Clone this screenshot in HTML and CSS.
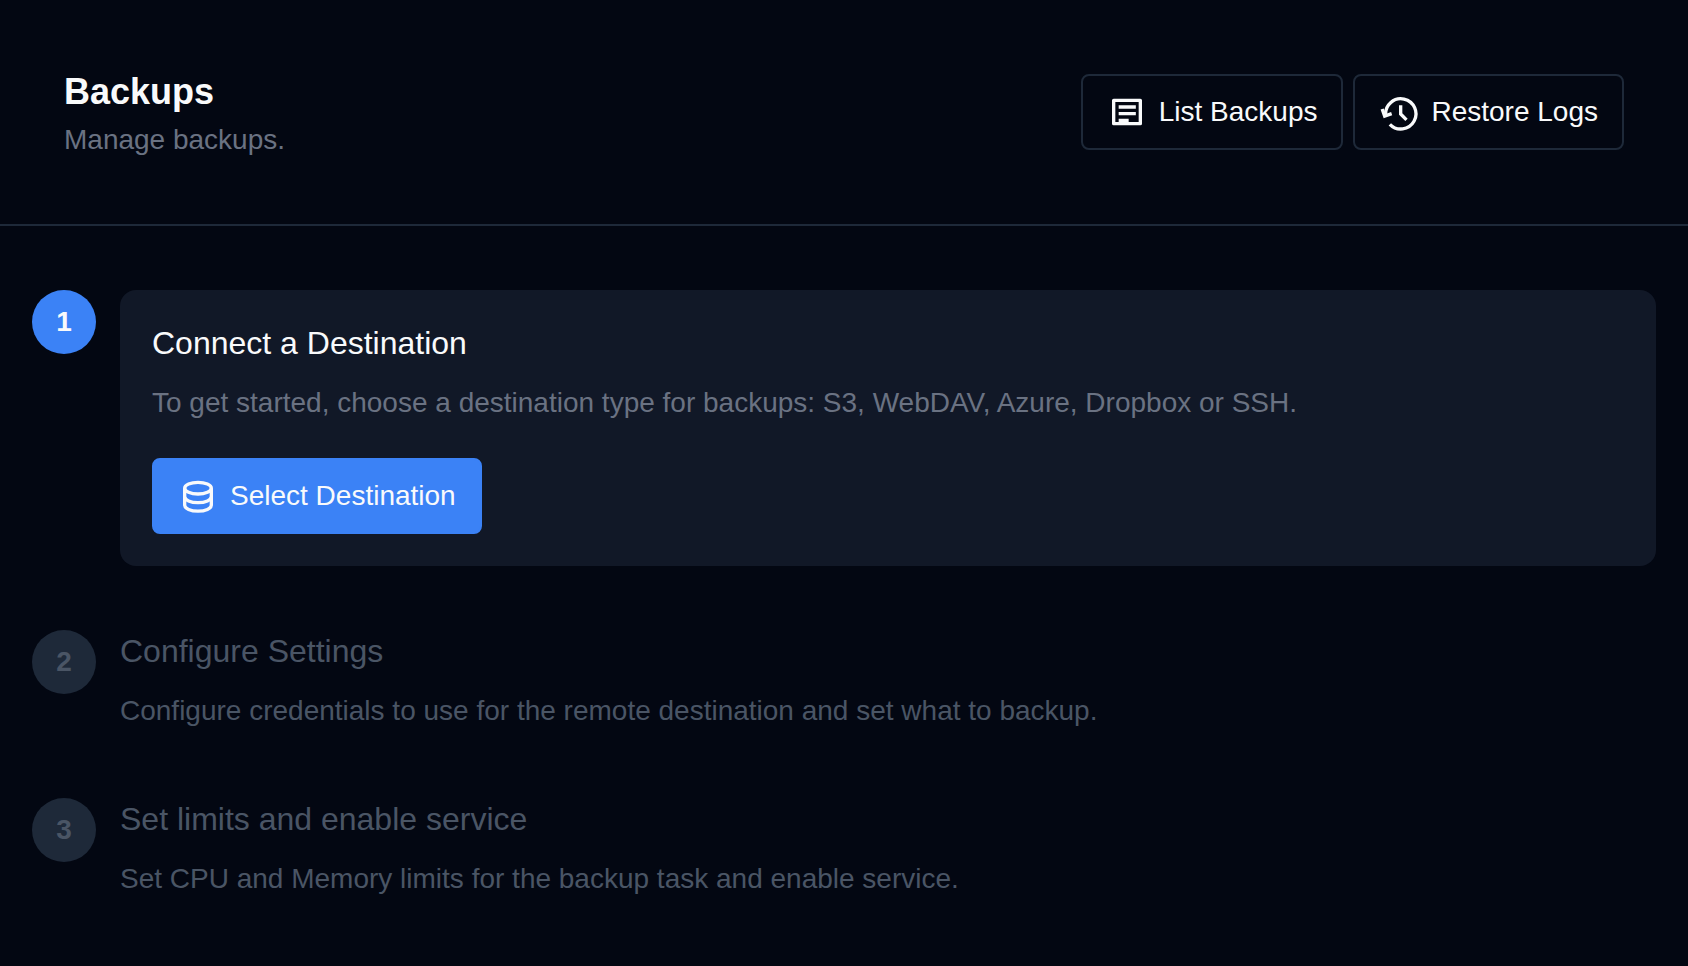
FILE: index.html
```
<!DOCTYPE html>
<html lang="en">
<head>
<meta charset="utf-8">
<meta name="viewport" content="width=device-width, initial-scale=1">
<title>Backups</title>
<link rel="stylesheet" href="styles.css">
</head>
<body>
<header class="page-header">
  <div class="heading">
    <h1 class="page-title">Backups</h1>
    <p class="subtitle">Manage backups.</p>
  </div>
  <div class="actions">
    <button type="button" class="button button-outline">
      <svg class="icon" viewBox="0 0 24 24" fill="none" stroke="currentColor" stroke-width="2" stroke-linejoin="round" aria-hidden="true">
        <path d="M4 5h16v14H4z"/>
        <path d="M7 9h10.300M7 13h10.300M7 17h6"/>
      </svg>
      List Backups
    </button>
    <button type="button" class="button button-outline">
      <svg class="icon" viewBox="0 0 24 24" fill="none" stroke="currentColor" stroke-width="2" aria-hidden="true">
        <path d="M4 13.800A9.100 9.100 0 1 1 6.500 19.400"/>
        <path d="M1.900 10.200l1.500 4.300 4.200-1.500"/>
        <path d="M13 8v5.200l3.500 3.500"/>
      </svg>
      Restore Logs
    </button>
  </div>
</header>
<main>
  <ol class="steps">
    <li class="step step-active">
      <span class="step-number">1</span>
      <section class="step-body">
        <h2 class="step-title">Connect a Destination</h2>
        <p class="step-text">To get started, choose a destination type for backups: S3, WebDAV, Azure, Dropbox or SSH.</p>
        <button type="button" class="button button-primary">
          <svg class="icon" viewBox="0 0 24 24" fill="none" stroke="currentColor" stroke-width="2" aria-hidden="true">
            <ellipse cx="12" cy="7.300" rx="8" ry="3.500"/>
            <path d="M4 7.300v10.300c0 1.930 3.580 3.500 8 3.500s8-1.570 8-3.500V7.300"/>
            <path d="M4 12.500c0 1.930 3.580 3.500 8 3.500s8-1.570 8-3.500"/>
          </svg>
          Select Destination
        </button>
      </section>
    </li>
    <li class="step">
      <span class="step-number">2</span>
      <section class="step-body">
        <h2 class="step-title">Configure Settings</h2>
        <p class="step-text">Configure credentials to use for the remote destination and set what to backup.</p>
      </section>
    </li>
    <li class="step">
      <span class="step-number">3</span>
      <section class="step-body">
        <h2 class="step-title">Set limits and enable service</h2>
        <p class="step-text">Set CPU and Memory limits for the backup task and enable service.</p>
      </section>
    </li>
  </ol>
</main>
</body>
</html>
```
FILE: styles.css
```
* {
  box-sizing: border-box;
}

body {
  margin: 0;
  background: #030712;
  color: #f9fafb;
  font: 28px/40px "Liberation Sans", Arial, sans-serif;
}

h1, h2, p, ol {
  margin: 0;
  padding: 0;
}

.page-header {
  display: flex;
  flex-wrap: wrap;
  align-items: center;
  justify-content: space-between;
  gap: 24px;
  padding: 64px;
  border-bottom: 2px solid #1e2939;
}

.page-title {
  font-size: 36px;
  line-height: 56px;
  font-weight: 700;
}

.subtitle {
  color: #6a7282;
}

.actions {
  display: flex;
  flex-wrap: wrap;
  gap: 10px;
}

.button {
  display: flex;
  align-items: center;
  gap: 12px;
  padding: 16px 24px;
  border: 2px solid transparent;
  border-radius: 8px;
  color: #f9fafb;
  font: inherit;
  cursor: pointer;
}

.button-outline {
  background: transparent;
  border-color: #1e2939;
}

.button-primary {
  margin-top: 32px;
  background: #3b82f6;
  border-color: #3b82f6;
}

.icon {
  width: 40px;
  height: 40px;
  flex: none;
}

.steps {
  display: flex;
  flex-direction: column;
  gap: 64px;
  padding: 64px 32px;
  list-style: none;
}

.step {
  display: flex;
  gap: 24px;
  color: #4a5565;
}

.step-number {
  display: grid;
  place-items: center;
  flex: none;
  width: 64px;
  height: 64px;
  border-radius: 50%;
  background: #1e2939;
  font-weight: 700;
}

.step-body {
  flex: 1;
  min-width: 0;
}

.step-title {
  margin-bottom: 16px;
  font-size: 32px;
  line-height: 42px;
  font-weight: 400;
}

.step-text {
  line-height: 46px;
}

.step-active .step-number {
  background: #3b82f6;
  color: #f9fafb;
}

.step-active .step-body {
  padding: 32px;
  border-radius: 16px;
  background: #111827;
}

.step-active .step-title {
  color: #f9fafb;
}

.step-active .step-text {
  color: #6a7282;
}
```
